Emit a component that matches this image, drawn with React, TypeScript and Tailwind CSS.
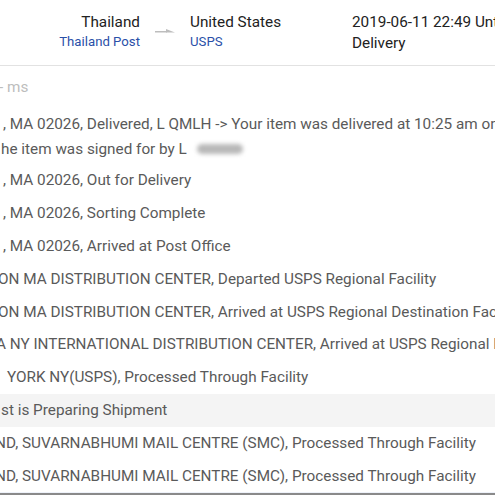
import React from "react";

const rows: { text: string; ml: string; bg?: string }[] = [
  { text: ", MA 02026, Out for Delivery", ml: "ml-[3px]" },
  { text: ", MA 02026, Sorting Complete", ml: "ml-[3px]" },
  { text: ", MA 02026, Arrived at Post Office", ml: "ml-[3px]" },
  { text: "ON MA DISTRIBUTION CENTER, Departed USPS Regional Facility", ml: "ml-[-2px]" },
  { text: "ON MA DISTRIBUTION CENTER, Arrived at USPS Regional Destination Facility", ml: "ml-[-2px]" },
  { text: "A NY INTERNATIONAL DISTRIBUTION CENTER, Arrived at USPS Regional Facility", ml: "ml-[-4px]" },
  { text: "YORK NY(USPS), Processed Through Facility", ml: "ml-[7px]" },
  { text: "st is Preparing Shipment", ml: "ml-[1px]", bg: "bg-[#f4f4f4]" },
  { text: "ND, SUVARNABHUMI MAIL CENTRE (SMC), Processed Through Facility", ml: "ml-[-5px]" },
  { text: "ND, SUVARNABHUMI MAIL CENTRE (SMC), Processed Through Facility", ml: "ml-[-5px]" },
];

export default function App() {
  return (
    <div className="w-[495px] h-[495px] overflow-hidden bg-white font-['Roboto',sans-serif] flex flex-col">
      {/* header */}
      <div className="h-[66px] shrink-0 border-b border-[#e2e2e2] flex pt-[12px]">
        <div className="w-[140px] shrink-0 flex flex-col items-end">
          <div className="text-[15.3px] leading-[20px] text-[#222]">Thailand</div>
          <div className="text-[13.2px] leading-[20px] text-[#2a50a8]">Thailand Post</div>
        </div>
        <div className="w-[50px] shrink-0 flex justify-center pt-[15px]">
          <svg width="24" height="8" viewBox="0 0 24 8">
            <path d="M2 5.5 L14 5.5 L14 4 L2 4 Z" fill="#bdbdbd" />
            <path d="M13 2 L22 5.5 L13 5.5 Z" fill="#bdbdbd" />
          </svg>
        </div>
        <div className="w-[162px] shrink-0 flex flex-col">
          <div className="text-[15.3px] leading-[20px] text-[#222]">United States</div>
          <div className="text-[13.2px] leading-[20px] text-[#2a50a8]">USPS</div>
        </div>
        <div className="flex flex-col whitespace-nowrap">
          <div className="text-[15.3px] leading-[21px] text-[#222]">2019-06-11 22:49 Until</div>
          <div className="text-[15.3px] leading-[21px] text-[#222]">Delivery</div>
        </div>
      </div>
      {/* body */}
      <div className="flex flex-col whitespace-nowrap text-[15.3px] text-[#5a5a5a]">
        <div className="h-[42px] shrink-0 flex items-center text-[#bdbdbd]">
          <span className="ml-[-1px]">- ms</span>
        </div>
        <div className="h-[56.5px] shrink-0 flex flex-col pt-[3.5px] leading-[25px]">
          <div className="ml-[3px]">
            , MA 02026, Delivered, L QMLH -&gt; Your item was delivered at 10:25 am on June 11, 2019
          </div>
          <div className="ml-[1px] flex items-center">
            <span>he item was signed for by L</span>
            <span className="ml-[10px] inline-block w-[46px] h-[10px] rounded-full bg-[#b8b8b8] blur-[2px]"></span>
          </div>
        </div>
        {rows.map((r, i) => (
          <div key={i} className={`h-[32.8px] shrink-0 flex items-center ${r.bg ?? ""}`}>
            <span className={r.ml}>{r.text}</span>
          </div>
        ))}
        <div className="h-[1px] shrink-0 bg-[#eef2fa]"></div>
        <div className="h-[2px] shrink-0 bg-[#8a8a8a]"></div>
      </div>
    </div>
  );
}
